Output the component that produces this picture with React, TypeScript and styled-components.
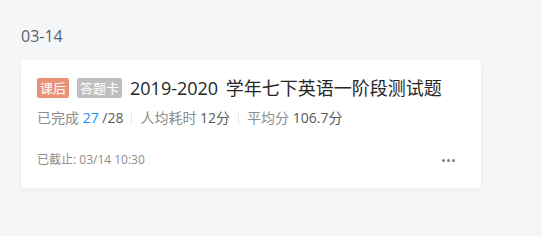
import React from "react";
import styled, { createGlobalStyle } from "styled-components";

const Global = createGlobalStyle`
  html, body { margin: 0; padding: 0; background: #f5f6f8; }
  body { font-family: "Open Sans", "Noto Sans CJK SC", sans-serif; width: 542px; height: 236px; overflow: hidden; }
`;

const Page = styled.div`
  padding: 25px 20px 0 21px;
`;

const DateLabel = styled.div`
  font-size: 16px;
  line-height: 22px;
  color: #595f6b;
  margin-bottom: 13px;
`;

const Card = styled.div`
  width: 460px;
  box-sizing: border-box;
  background: #fff;
  border-radius: 4px;
  box-shadow: 0 2px 6px rgba(30, 40, 60, 0.05);
  padding: 18px 26px 18px 16px;
`;

const TitleRow = styled.div`
  display: flex;
  align-items: center;
  gap: 8px;
  height: 20px;
`;

const Tag = styled.span<{ $bg: string }>`
  display: inline-flex;
  align-items: center;
  justify-content: center;
  height: 20px;
  padding: 0 3px;
  border-radius: 2px;
  background: ${(p) => p.$bg};
  color: #fff;
  font-family: "Noto Sans CJK SC", sans-serif;
  font-size: 13px;
  line-height: 20px;
`;

const Title = styled.span`
  font-size: 18px;
  line-height: 24px;
  color: #262626;
  white-space: nowrap;
  word-spacing: 3px;
`;

const Stats = styled.div`
  display: flex;
  align-items: center;
  margin-top: 9px;
  font-size: 14px;
  line-height: 22px;
  color: #8c8c8c;
  white-space: nowrap;
`;

const Num = styled.span<{ $blue?: boolean }>`
  color: ${(p) => (p.$blue ? "#1890ff" : "#595959")};
`;

const Sep = styled.span`
  display: inline-block;
  width: 1px;
  height: 14px;
  background: #e8e8e8;
  margin: 0 8px;
`;

const Footer = styled.div`
  display: flex;
  align-items: center;
  justify-content: space-between;
  margin-top: 21px;
  height: 20px;
`;

const Deadline = styled.span`
  font-size: 12px;
  line-height: 20px;
  color: #8c8c8c;
`;

const More = styled.span`
  display: inline-flex;
  gap: 2px;
`;

const Dot = styled.span`
  width: 3px;
  height: 3px;
  border-radius: 50%;
  background: #808080;
`;

export default function App() {
  return (
    <>
      <Global />
      <Page>
        <DateLabel>03-14</DateLabel>
        <Card>
          <TitleRow>
            <Tag $bg="#eb9178">课后</Tag>
            <Tag $bg="#bfbfbf">答题卡</Tag>
            <Title>2019-2020 学年七下英语一阶段测试题</Title>
          </TitleRow>
          <Stats>
            已完成&nbsp;<Num $blue>27</Num>
            <Num>&nbsp;/28</Num>
            <Sep />
            人均耗时&nbsp;<Num>12分</Num>
            <Sep />
            平均分&nbsp;<Num>106.7分</Num>
          </Stats>
          <Footer>
            <Deadline>已截止: 03/14 10:30</Deadline>
            <More>
              <Dot />
              <Dot />
              <Dot />
            </More>
          </Footer>
        </Card>
      </Page>
    </>
  );
}
